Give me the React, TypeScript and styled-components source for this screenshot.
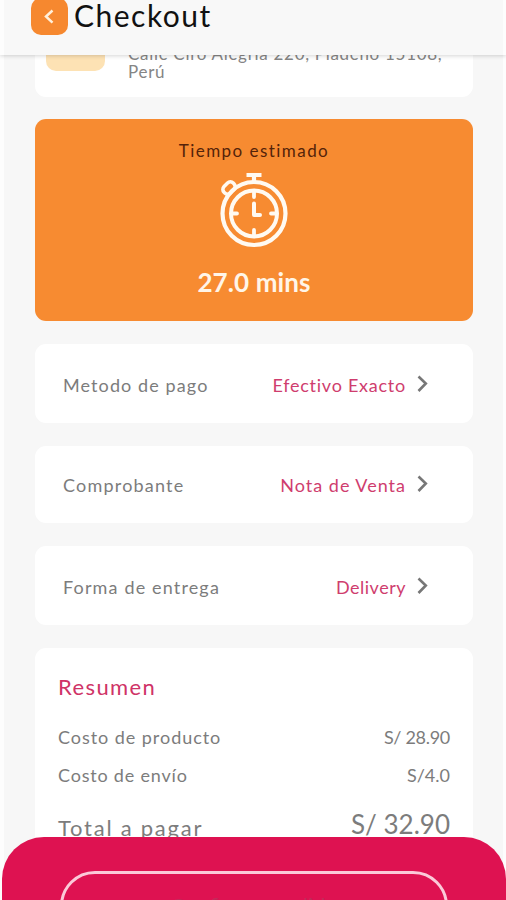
import React from "react";
import styled, { createGlobalStyle } from "styled-components";

const Global = createGlobalStyle`
  * { box-sizing: border-box; }
  body { margin: 0; background: #fff; overflow: hidden; font-family: Lato, "Open Sans", sans-serif; }
`;

const Screen = styled.div`
  position: relative;
  width: 506px;
  height: 900px;
  overflow: hidden;
  background: linear-gradient(90deg, #fdfdfd 4px, #f7f7f7 4px, #f7f7f7 503px, #fdfdfd 503px);
  display: flex;
  flex-direction: column;
`;

const Header = styled.header`
  flex: none;
  height: 55px;
  padding-left: 31px;
  display: flex;
  align-items: flex-start;
  background: linear-gradient(90deg, #fdfdfd 4px, #f8f8f8 4px, #f8f8f8 503px, #fdfdfd 503px);
  box-shadow: 0 1px 4px rgba(0, 0, 0, 0.17);
  z-index: 1;
`;

const BackButton = styled.button`
  width: 37px;
  height: 37px;
  margin: -2px 6px 0 0;
  padding: 0;
  border: 0;
  border-radius: 10px;
  background: #f6882f;
  display: grid;
  place-items: center;
`;

const Label = styled.span<{ $size: number; $color?: string; $track?: number; $weight?: number }>`
  display: block;
  margin: 0;
  white-space: nowrap;
  line-height: 1.2;
  font-size: ${(p) => p.$size}px;
  color: ${(p) => p.$color ?? "#7c7c7c"};
  letter-spacing: ${(p) => p.$track ?? 0}px;
  font-weight: ${(p) => p.$weight ?? 400};
`;

const Title = styled(Label)`
  line-height: 30px;
`;

const Content = styled.main`
  flex: 1;
  min-height: 0;
  overflow: hidden;
  padding: 0 33px 0 35px;
  display: flex;
  flex-direction: column;
`;

const Card = styled.section<{ $height: number; $gap: number }>`
  flex: none;
  height: ${(p) => p.$height}px;
  margin-bottom: ${(p) => p.$gap}px;
  border-radius: 11px;
  background: #fff;
`;

const AddressCard = styled(Card)`
  border-radius: 0 0 11px 11px;
  display: flex;
  align-items: flex-start;
`;

const Thumb = styled.div`
  width: 59px;
  height: 16px;
  margin-left: 11px;
  border-radius: 0 0 10px 10px;
  background: #fde2b4;
`;

const Address = styled.p`
  width: 330px;
  margin: -10px 0 0 23px;
  font-size: 17px;
  line-height: 18px;
  letter-spacing: 0.7px;
  color: #858585;
`;

const TimeCard = styled(Card)`
  background: #f78b31;
  padding-top: 22px;
  display: flex;
  flex-direction: column;
  align-items: center;
`;

const StopwatchIcon = styled.svg`
  display: block;
  margin: 11px 0 19px;
`;

const OptionCard = styled(Card)<{ $shift: number }>`
  display: flex;
  align-items: center;
  padding: ${(p) => p.$shift}px 44px 0 28px;
`;

const OptionValue = styled.div`
  margin-left: auto;
  display: flex;
  align-items: center;
  gap: 11px;
`;

const ChevronIcon = styled.svg`
  margin-top: -4px;
`;

const SummaryCard = styled(Card)`
  padding: 26px 23px 0 23px;
`;

const SummaryRow = styled.div<{ $top: number }>`
  margin-top: ${(p) => p.$top}px;
  display: flex;
  justify-content: space-between;
  align-items: center;
`;

const TotalLabel = styled(Label)`
  margin-top: 6px;
`;

const Footer = styled.footer`
  position: absolute;
  left: 2px;
  right: 0;
  bottom: 0;
  height: 63px;
  padding: 34px 58px 0 58px;
  overflow: hidden;
  border-radius: 42px 42px 0 0;
  background: #de1251;
  z-index: 2;
`;

const OrderButton = styled.button`
  width: 100%;
  height: 70px;
  padding: 19px 0 0;
  border: 3px solid #fbc9d8;
  border-radius: 35px;
  background: transparent;
  display: flex;
  justify-content: center;
  align-items: flex-start;
  font-family: inherit;
`;

const BackIcon = () => (
  <svg width="37" height="37" viewBox="0 0 37 37" fill="none">
    <path d="M21.5 12.5 15 18.5l6.5 6.2" stroke="#fff0db" strokeWidth="2.5" />
  </svg>
);

const Chevron = () => (
  <ChevronIcon width="12" height="18" viewBox="0 0 12 18" fill="none">
    <path d="m1.500 1.500 7.300 7L1.500 16" stroke="#777" strokeWidth="2.600" />
  </ChevronIcon>
);

const Stopwatch = () => (
  <StopwatchIcon width="70" height="76" viewBox="0 0 70 76" fill="none" stroke="#fffaf2">
    <circle cx="35" cy="41.5" r="31.5" strokeWidth="4.2" />
    <circle cx="35" cy="41.5" r="23" strokeWidth="4" />
    <path d="M27.500 3h15M35 3v7" strokeWidth="4.200" />
    <rect x="3.500" y="11.500" width="13" height="9" rx="4" transform="rotate(-45 10 16)" strokeWidth="3.600" />
    <path d="M35 20v5M35 58v5M13 41.500h5M52 41.500h5" strokeWidth="3.800" strokeLinecap="round" />
    <path d="M35 31.500v11.500h6" strokeWidth="4" strokeLinecap="round" strokeLinejoin="round" />
  </StopwatchIcon>
);

const OPTIONS = [
  { label: "Metodo de pago", value: "Efectivo Exacto", height: 79, shift: 4, track: 1.1, valueTrack: 0.75 },
  { label: "Comprobante", value: "Nota de Venta", height: 77, shift: 2, track: 1.2, valueTrack: 1 },
  { label: "Forma de entrega", value: "Delivery", height: 79, shift: 4, track: 1.15, valueTrack: 0.5 },
];

export default function App() {
  return (
    <>
      <Global />
      <Screen>
        <Header>
          <BackButton aria-label="Volver"><BackIcon /></BackButton>
          <Title as="h1" $size={30} $color="#111" $track={1.5}>Checkout</Title>
        </Header>
        <Content>
          <AddressCard $height={42} $gap={22}>
            <Thumb />
            <Address>Calle Ciro Alegría 220, Pladeño 15108, Perú</Address>
          </AddressCard>
          <TimeCard $height={202} $gap={23}>
            <Label $size={17} $color="#54230a" $track={1.45}>Tiempo estimado</Label>
            <Stopwatch />
            <Label $size={26} $color="#fff5e8" $weight={700} $track={0.1}>27.0 mins</Label>
          </TimeCard>
          {OPTIONS.map((o) => (
            <OptionCard key={o.label} $height={o.height} $gap={23} $shift={o.shift}>
              <Label $size={18} $track={o.track}>{o.label}</Label>
              <OptionValue>
                <Label $size={18} $color="#cf3d6e" $track={o.valueTrack}>{o.value}</Label>
                <Chevron />
              </OptionValue>
            </OptionCard>
          ))}
          <SummaryCard $height={253} $gap={0}>
            <Label $size={22} $color="#cf3367" $track={1.4}>Resumen</Label>
            <SummaryRow $top={27}>
              <Label $size={18} $track={0.95}>Costo de producto</Label>
              <Label $size={18} $track={-0.3}>S/ 28.90</Label>
            </SummaryRow>
            <SummaryRow $top={16}>
              <Label $size={18} $track={0.8}>Costo de envío</Label>
              <Label $size={18}>S/4.0</Label>
            </SummaryRow>
            <SummaryRow $top={22}>
              <TotalLabel $size={22} $track={1.75}>Total a pagar</TotalLabel>
              <Label $size={26}>S/ 32.90</Label>
            </SummaryRow>
          </SummaryCard>
        </Content>
        <Footer>
          <OrderButton>
            <Label $size={22} $color="#c3295a">Confirmar pedido</Label>
          </OrderButton>
        </Footer>
      </Screen>
    </>
  );
}
